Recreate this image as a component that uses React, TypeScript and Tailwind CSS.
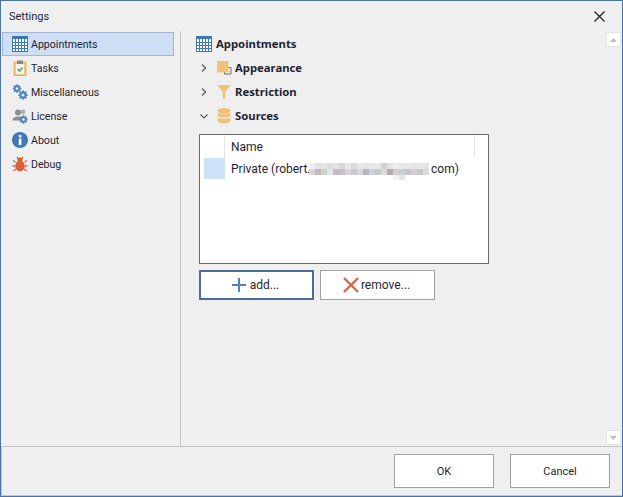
import { ReactNode } from 'react'

const font = { fontFamily: 'Roboto, "Noto Sans", sans-serif' }
const boldFont = { fontFamily: '"Noto Sans", Roboto, sans-serif' }

// the redacted part of the mail address
const blurTop = [
  '#f0f0f0', '#e4e0e0', '#e8e4e4', '#dcdcdc', '#e4e4e4', '#dcd8d8', '#e8e8e8', '#d8d8e0', '#e8e8e8', '#e4e4e4',
  '#e8e8e8', '#e8e8e8', '#d8d0d0', '#e4e4e8', '#ececec', '#e8e8e8', '#e8e8e8', '#e4e4e8', '#e8e8e8', '#e4e4e8',
]
const blurBottom = [
  '#d8d4d4', '#c4bcbc', '#ccd4d0', '#e4e4e4', '#c0bcc8', '#c8c0cc', '#d8d4d4', '#c8c8d4', '#d8d8d8', '#b8b8c4',
  '#d0d0d8', '#c4c8d0', '#dcd8d8', '#b4acac', '#ccd0d0', '#c8d0d0', '#c8c4d0', '#d4d0d0', '#c8c8c8', '#dcdce0',
]

function BlurRow({ colors }: { colors: string[] }) {
  return (
    <div className="flex h-[6px]">
      {colors.map((c, i) => (
        <div key={i} className="h-full w-[6px]" style={{ backgroundColor: c }} />
      ))}
    </div>
  )
}

function CalendarIcon() {
  return (
    <svg width="16" height="16" viewBox="0 0 16 16">
      <rect x="0.5" y="0.5" width="15" height="15" fill="#fff" stroke="#3f79b5" />
      <rect x="0" y="0" width="16" height="3" fill="#3f79b5" />
      <path d="M3.5 3v12M6.5 3v12M9.5 3v12M12.5 3v12M0 6.5h16M0 9.5h16M0 12.5h16" stroke="#3f79b5" />
    </svg>
  )
}

function TasksIcon() {
  return (
    <svg width="16" height="16" viewBox="0 0 16 16">
      <rect x="2" y="2" width="12" height="13.5" fill="#f2c77e" stroke="#eab04f" />
      <rect x="4" y="4" width="8" height="10" fill="#f4f4f4" />
      <rect x="5" y="0.5" width="6" height="3.5" fill="#8a8a8a" />
      <path d="M5.5 9l2 2 3-3.5" fill="none" stroke="#5da08c" strokeWidth="1.6" />
    </svg>
  )
}

function Gear({ cx, cy, r, color }: { cx: number; cy: number; r: number; color: string }) {
  const teeth = [0, 45, 90, 135]
  return (
    <g>
      {teeth.map((a) => (
        <rect
          key={a}
          x={cx - 0.9}
          y={cy - r - 1.2}
          width="1.8"
          height={2 * r + 2.4}
          fill={color}
          transform={`rotate(${a} ${cx} ${cy})`}
        />
      ))}
      <circle cx={cx} cy={cy} r={r} fill={color} />
      <circle cx={cx} cy={cy} r={r * 0.45} fill="#f0f0f0" />
    </g>
  )
}

function GearsIcon() {
  return (
    <svg width="16" height="16" viewBox="0 0 16 16">
      <Gear cx={5} cy={4.6} r={3} color="#4f83bd" />
      <Gear cx={11} cy={11} r={3.4} color="#4f83bd" />
    </svg>
  )
}

function LicenseIcon() {
  return (
    <svg width="16" height="16" viewBox="0 0 16 16">
      <circle cx="6" cy="4.5" r="3" fill="#8e8e8e" />
      <path d="M0.5 12.5c0-3 2.5-4 5.5-4s3.5 1 3.5 4z" fill="#8e8e8e" />
      <circle cx="11" cy="4" r="2.4" fill="#b0b0b0" />
      <Gear cx={11.5} cy={11.5} r={3} color="#4f83bd" />
    </svg>
  )
}

function InfoIcon() {
  return (
    <svg width="16" height="16" viewBox="0 0 16 16">
      <circle cx="8" cy="8" r="8" fill="#3f79b5" />
      <rect x="6.8" y="3" width="2.6" height="2.4" fill="#fff" />
      <rect x="6.8" y="6.6" width="2.6" height="6.4" fill="#fff" />
    </svg>
  )
}

function BugIcon() {
  return (
    <svg width="16" height="16" viewBox="0 0 16 16">
      <ellipse cx="8" cy="10" rx="4.8" ry="5.2" fill="#d9603c" />
      <circle cx="8" cy="4" r="2.6" fill="#d9603c" />
      <path d="M5 1l1.500 2M11 1L9.500 3M3.500 6L1 4.500M12.500 6L15 4.500M3 10H0.500M13 10h2.500M4 13l-2.500 2M12 13l2.500 2" stroke="#d9603c" strokeWidth="1.300" />
    </svg>
  )
}

function AppearanceIcon() {
  return (
    <svg width="15" height="16" viewBox="0 0 15 16">
      <rect x="0" y="1" width="11.500" height="11.500" fill="#eec27a" />
      <path d="M11.500 7.500h2.500v6.500h-6.500v-1.500" fill="none" stroke="#6f6f6f" />
    </svg>
  )
}

function FilterIcon() {
  return (
    <svg width="14" height="16" viewBox="0 0 14 16">
      <path d="M0 1h14L8.500 7.500 7.800 15h-1.800L5.500 7.500z" fill="#eec27a" />
    </svg>
  )
}

function DatabaseIcon() {
  return (
    <svg width="14" height="16" viewBox="0 0 14 16">
      <ellipse cx="7" cy="2.800" rx="6.500" ry="2.800" fill="#eec27a" />
      <path d="M0.500 4.500c1.500 1.600 11.500 1.600 13 0V8c-1.500 2-11.500 2-13 0z" fill="#eec27a" />
      <path d="M0.500 9.500c1.500 1.600 11.500 1.600 13 0V13c-1.500 3.400-11.500 3.400-13 0z" fill="#eec27a" />
    </svg>
  )
}

function NavItem({ icon, label, selected }: { icon: ReactNode; label: string; selected?: boolean }) {
  return (
    <div
      className={`flex h-6 items-center gap-[3px] border pl-[9px] text-[10.6px] ${
        selected ? 'border-[#a4b6d4] bg-[#cddef5]' : 'border-transparent'
      }`}
    >
      {icon}
      <span className="pt-[2px]">{label}</span>
    </div>
  )
}

function Group({ open, icon, label }: { open?: boolean; icon: ReactNode; label: string }) {
  return (
    <div className="flex h-6 items-center pl-[19px]">
      <svg width="8" height="8" viewBox="0 0 8 8" className="mr-[9px]">
        <path
          d={open ? 'M0.500 2.500L4 6l3.500-3.500' : 'M2 0.500L5.500 4 2 7.500'}
          fill="none"
          stroke="#555"
          strokeWidth="1.100"
        />
      </svg>
      <div className="flex w-[18px] justify-start">{icon}</div>
      <span className="text-[11.3px] font-bold" style={boldFont}>
        {label}
      </span>
    </div>
  )
}

function ScrollArrow({ up }: { up?: boolean }) {
  return (
    <div className="flex h-[15px] w-[15px] items-center justify-center border border-[#e4e4e4] bg-white">
      <svg width="7" height="4" viewBox="0 0 7 4">
        <path d={up ? 'M0 4L3.500 0 7 4z' : 'M0 0L3.500 4 7 0z'} fill="#bdbdbd" />
      </svg>
    </div>
  )
}

export default function App() {
  return (
    <div
      className="flex h-[497px] w-[623px] flex-col border border-[#4a74a8] bg-[#efefef] text-[#1f2433]"
      style={font}
    >
      <div className="flex h-[30px] shrink-0 items-center justify-between pl-2 pr-[17px] text-[11px]">
        <span className="pt-[2px]">Settings</span>
        <svg width="11" height="11" viewBox="0 0 11 11">
          <path d="M0.500 0.500l10 10M10.500 0.500l-10 10" stroke="#222" strokeWidth="1.300" />
        </svg>
      </div>

      <div className="flex min-h-0 flex-1">
        <div className="w-[180px] shrink-0 border-r border-[#c4c4c4] pl-px pr-[6px] pt-px">
          <NavItem icon={<CalendarIcon />} label="Appointments" selected />
          <NavItem icon={<TasksIcon />} label="Tasks" />
          <NavItem icon={<GearsIcon />} label="Miscellaneous" />
          <NavItem icon={<LicenseIcon />} label="License" />
          <NavItem icon={<InfoIcon />} label="About" />
          <NavItem icon={<BugIcon />} label="Debug" />
        </div>

        <div className="flex min-w-0 flex-1 pl-[14px] pr-px pt-px">
          <div className="w-[296px]">
            <div className="flex h-6 items-center gap-1 pl-px">
              <CalendarIcon />
              <span className="text-[11.3px] font-bold" style={boldFont}>
                Appointments
              </span>
            </div>
            <div className="-ml-[14px]">
              <Group icon={<AppearanceIcon />} label="Appearance" />
              <Group icon={<FilterIcon />} label="Restriction" />
              <Group open icon={<DatabaseIcon />} label="Sources" />
            </div>

            <div className="ml-[4px] mt-[6px] h-[130px] w-[290px] border border-[#6a6a6a] bg-white text-xs">
              <div className="flex h-[23px]">
                <div className="w-[25px] border-r border-[#e6e6e6]" />
                <div className="flex w-[250px] items-center border-r border-[#e6e6e6] pl-[6px]">Name</div>
              </div>
              <div className="flex h-[21px] items-center">
                <div className="ml-1 h-full w-[21px] bg-[#cce3f7]" />
                <span className="ml-[6px] w-[78px] whitespace-nowrap pt-[1px]">Private (robert.</span>
                <div className="relative h-[12px] w-[120px]">
                  <BlurRow colors={blurTop} />
                  <BlurRow colors={blurBottom} />
                  <div className="absolute left-[84px] top-[12px] flex h-[5px]">
                    <div className="w-[6px] bg-[#f4f2f2]" />
                    <div className="w-[6px] bg-[#e4e4ec]" />
                  </div>
                </div>
                <span className="ml-[2px] pt-[1px]">com)</span>
              </div>
            </div>

            <div className="ml-[4px] mt-[6px] flex gap-[6px] text-xs">
              <button className="flex h-[30px] w-[115px] items-center justify-center gap-1 border-2 border-[#4a6c9c] bg-white pr-[2px]">
                <svg width="14" height="14" viewBox="0 0 14 14">
                  <path d="M7 0v14M0 7h14" stroke="#4f83bd" strokeWidth="2" />
                </svg>
                <span>add...</span>
              </button>
              <button className="flex h-[30px] w-[115px] items-center justify-center gap-[2px] border border-[#a0a0a0] bg-white pr-[2px]">
                <svg width="16" height="16" viewBox="0 0 16 16">
                  <path d="M1 1l14 14M15 1L1 15" stroke="#dc6442" strokeWidth="2.400" />
                </svg>
                <span>remove...</span>
              </button>
            </div>
          </div>

          <div className="ml-auto flex flex-col justify-between pb-px">
            <ScrollArrow up />
            <ScrollArrow />
          </div>
        </div>
      </div>

      <div className="flex h-[50px] shrink-0 items-start justify-end gap-4 border border-r-0 border-[#c4c4c4] pr-3 pt-[7px] text-[11px]">
        <button className="h-[34px] w-[100px] border border-[#a0a0a0] bg-white pt-[2px]">OK</button>
        <button className="h-[34px] w-[100px] border border-[#a0a0a0] bg-white pt-[2px]">Cancel</button>
      </div>
    </div>
  )
}
